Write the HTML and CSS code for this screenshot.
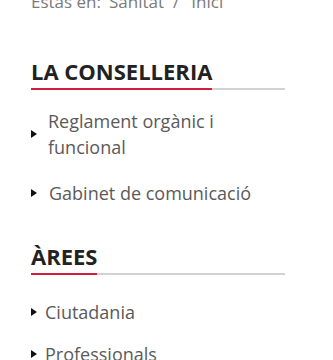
FILE: index.html
```html
<!DOCTYPE html>
<html lang="ca">
<head>
<meta charset="utf-8">
<link rel="stylesheet" href="styles.css">
</head>
<body>
<div class="page">
  <nav class="crumbs"><span class="crumbs__label">Estas en:</span><span class="crumbs__link">Sanitat</span><span class="crumbs__sep">/</span><span class="crumbs__link">Inici</span></nav>

  <section class="block block--first">
    <div class="block__head"><h2 class="block__title">LA CONSELLERIA</h2></div>
    <ul class="links links--wide">
      <li class="links__item">Reglament orgànic i funcional</li>
      <li class="links__item links__item--shift">Gabinet de comunicació</li>
    </ul>
  </section>

  <section class="block block--second">
    <div class="block__head"><h2 class="block__title">ÀREES</h2></div>
    <ul class="links links--narrow">
      <li class="links__item">Ciutadania</li>
      <li class="links__item">Professionals</li>
    </ul>
  </section>
</div>
</body>
</html>
```

FILE: styles.css
```css
html, body {
  margin: 0;
  padding: 0;
  background: #ffffff;
}

body {
  font-family: "Open Sans", "Liberation Sans", sans-serif;
  overflow: hidden;
}

.page {
  width: 254px;
  padding-left: 31px;
}

.crumbs {
  margin-top: -10px;
  height: 24px;
  line-height: 24px;
  font-size: 17px;
  color: #7a7a7a;
  display: flex;
  white-space: nowrap;
}

.crumbs__label {
  margin-right: 8px;
}

.crumbs__sep {
  margin: 0 12px 0 9px;
}

.block--first {
  margin-top: 44px;
}

.block--second {
  margin-top: 37px;
}

.block__head {
  border-bottom: 2px solid #d2d2d2;
  display: flex;
}

.block__title {
  margin: 0 0 -2px 0;
  padding-bottom: 4px;
  font-size: 22px;
  line-height: 26px;
  font-weight: 700;
  color: #222222;
  border-bottom: 2px solid #cf1f3d;
}

.links {
  list-style: none;
  margin: 0;
  padding: 0;
  display: flex;
  flex-direction: column;
}

.links--wide {
  margin-top: 18px;
  gap: 20px;
}

.links--narrow {
  margin-top: 24px;
  gap: 16px;
}

.links__item {
  display: flex;
  align-items: center;
  font-size: 18px;
  line-height: 26px;
  color: #5a5a5a;
}

.links__item::before {
  content: "";
  flex: none;
  width: 0;
  height: 0;
  border-top: 4px solid transparent;
  border-bottom: 4px solid transparent;
  border-left: 6px solid #111111;
}

.links--wide .links__item::before {
  margin-right: 11px;
}

.links--wide .links__item--shift::before {
  margin-right: 12px;
}

.links--narrow .links__item::before {
  margin-right: 8px;
}
```
